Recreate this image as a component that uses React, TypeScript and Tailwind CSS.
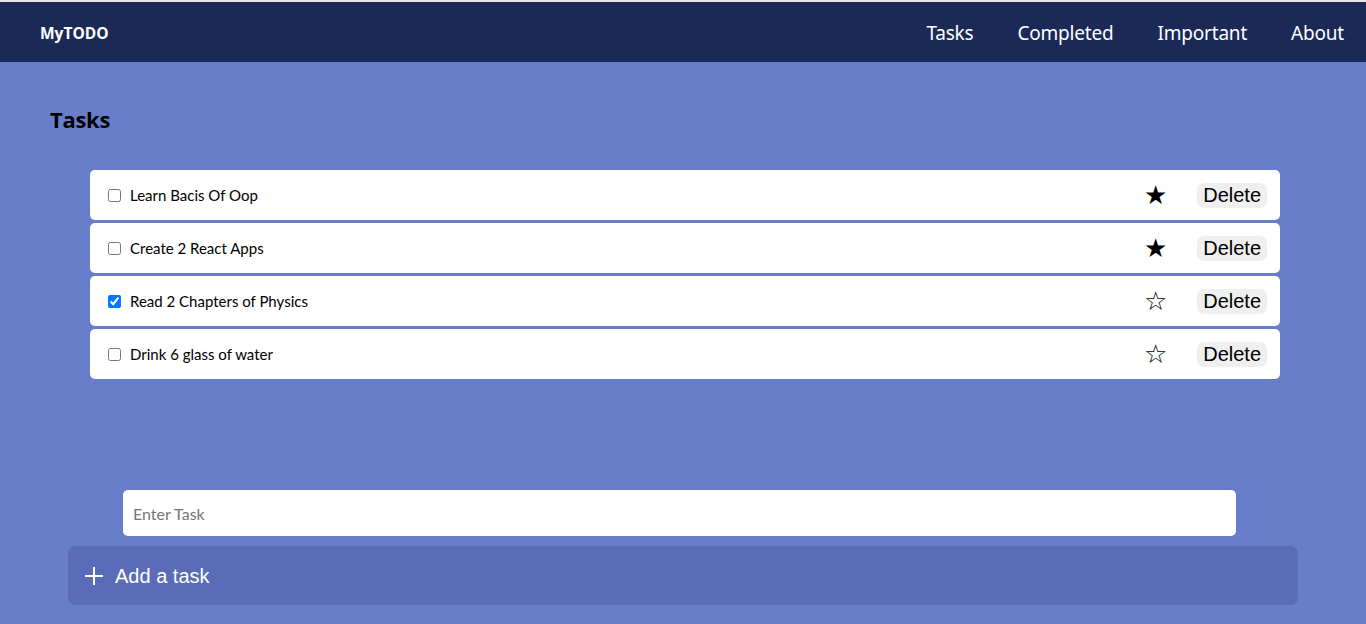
import React from "react";

const tasks = [
  { text: "Learn Bacis Of Oop", done: false, star: true },
  { text: "Create 2 React Apps", done: false, star: true },
  { text: "Read 2 Chapters of Physics", done: true, star: false },
  { text: "Drink 6 glass of water", done: false, star: false },
];

export default function App() {
  return (
    <div className="min-h-[624px] bg-[#697ecb] flex flex-col">
      <div className="h-[2px] bg-[#e6e6e6]" />
      <nav className="h-[60px] bg-[#1b2957] flex items-center justify-between pl-[40px] pr-[22px] pt-[3px]">
        <div className="text-white font-bold text-[15.5px] font-['Open_Sans',sans-serif]">MyTODO</div>
        <div className="flex items-center gap-[44px] text-white text-[19px] font-['Noto_Sans',sans-serif] tracking-[-0.2px]">
          <span>Tasks</span>
          <span>Completed</span>
          <span>Important</span>
          <span>About</span>
        </div>
      </nav>
      <div className="pl-[50px] pt-[41px]">
        <h1 className="text-[22px] font-bold font-['Open_Sans',sans-serif] text-black leading-[32px] tracking-[-0.3px]">Tasks</h1>
      </div>
      <div className="mx-[90px] mt-[35px] flex flex-col gap-[3px] w-[1190px]">
        {tasks.map((t) => (
          <div key={t.text} className="h-[50px] bg-white rounded-[5px] flex items-center pl-[18px] pr-[13px]">
            <input type="checkbox" defaultChecked={t.done} className="w-[13px] h-[13px] m-0" />
            <span className="ml-[9px] text-[15px] font-['Lato',sans-serif] text-black flex-1">{t.text}</span>
            <span className="text-[26px] leading-none text-black mr-[30px] font-['DejaVu_Sans',sans-serif]">{t.star ? "★" : "☆"}</span>
            <button className="bg-[#efefef] rounded-[7px] px-[6px] h-[25px] text-[20px] leading-[25px] font-['Liberation_Sans',sans-serif] text-black">Delete</button>
          </div>
        ))}
      </div>
      <div className="ml-[123px] mt-[111px] w-[1113px] h-[46px] bg-white rounded-[5px] flex items-center pl-[10px]">
        <input placeholder="Enter Task" className="w-full outline-none text-[16px] font-['Lato',sans-serif] placeholder:text-[#757575] pt-[2px]" />
      </div>
      <div className="ml-[68px] mt-[10px] w-[1230px] h-[59px] bg-[#5a6cb7] rounded-[7px] flex items-center pl-[16px] text-white">
        <svg width="20" height="20" viewBox="0 0 20 20" className="mr-[11px]">
          <path d="M10 1v18M1 10h18" stroke="white" strokeWidth="2" />
        </svg>
        <span className="text-[20px] font-['Liberation_Sans',sans-serif]">Add a task</span>
      </div>
    </div>
  );
}
